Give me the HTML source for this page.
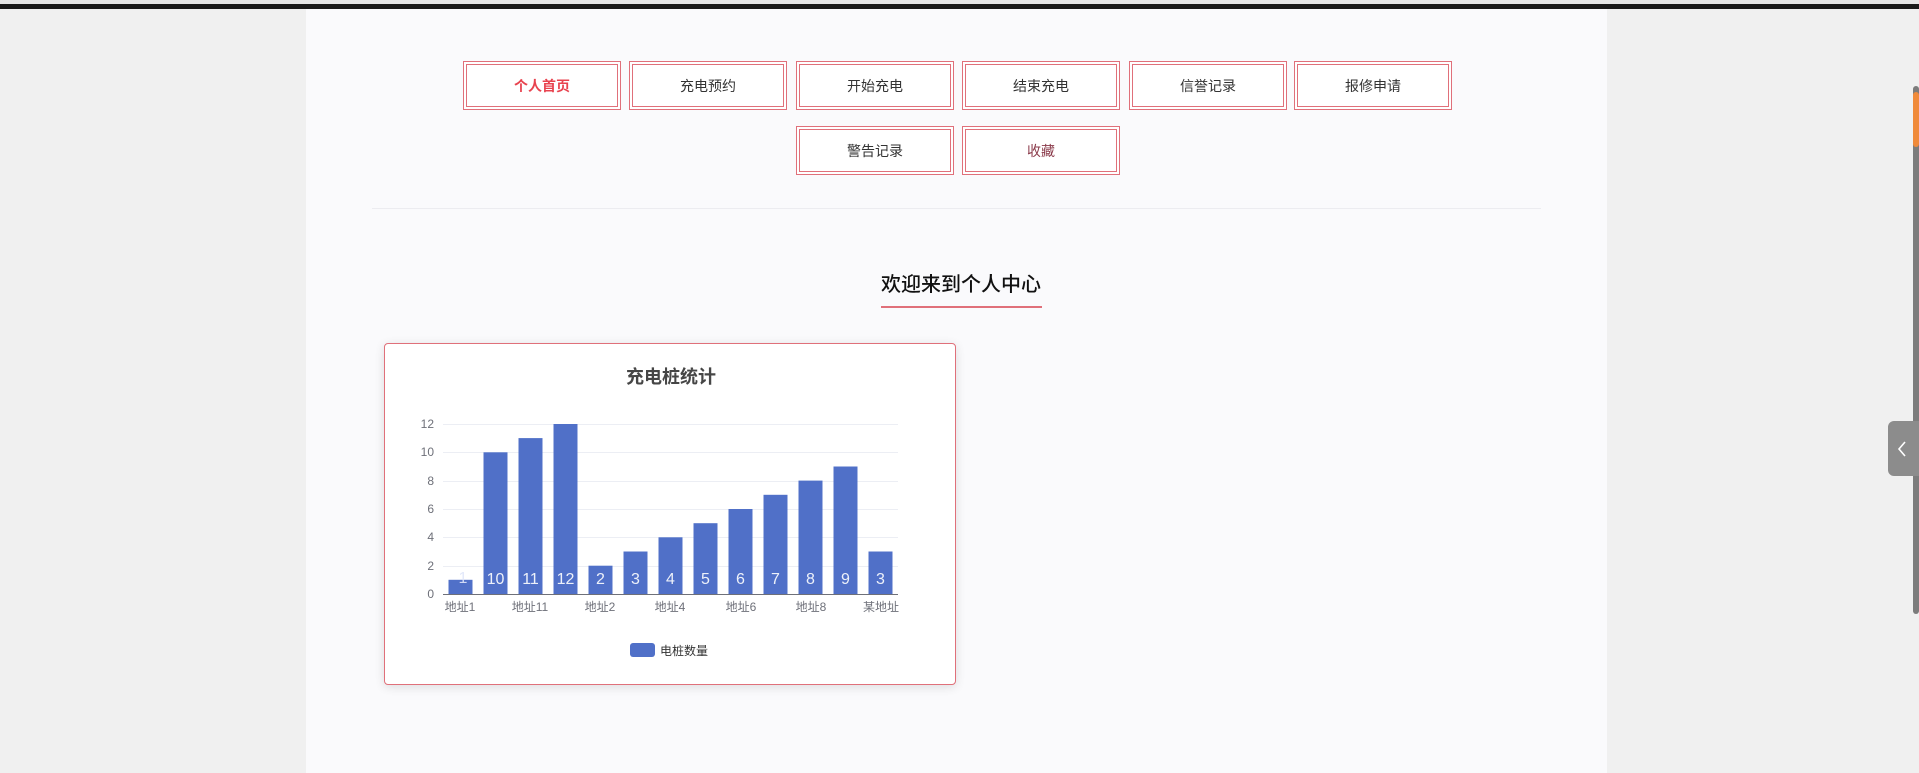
<!DOCTYPE html>
<html><head><meta charset="utf-8"><style>
*{margin:0;padding:0;box-sizing:border-box}
body{width:1919px;height:773px;background:#f0f0f0;position:relative;overflow:hidden;font-family:"Liberation Sans","Noto Sans CJK SC",sans-serif}
.top{position:absolute;left:0;top:0;width:1919px;height:4px;background:#e6e6e6}
.bar{position:absolute;left:0;top:4px;width:1919px;height:5px;background:#1a1a1a}
.main{position:absolute;left:306px;top:9px;width:1301px;height:764px;background:#fafafc}
.btn{position:absolute;width:158px;height:49px;border:1px solid #e0707a;background:#fff;font-size:14px;color:#333;display:flex;align-items:center;justify-content:center}
.btn::before{content:"";position:absolute;left:2px;top:2px;right:2px;bottom:2px;border:1px solid #e0707a}
.div{position:absolute;left:372px;top:208px;width:1169px;height:1px;background:#ececf0}
.h{position:absolute;left:860px;top:268px;width:202px;text-align:center;font-size:20px;color:#111;font-weight:500}
.ul{position:absolute;left:881px;top:306px;width:161px;height:2px;background:#e0707a}
.card{position:absolute;left:384px;top:343px;width:572px;height:342px;border:1px solid #e0707a;border-radius:4px;background:#fff;box-shadow:0 2px 10px rgba(0,0,0,.12)}
.track{position:absolute;left:1913px;top:86px;width:6px;height:528px;background:#7c7c7c;border-radius:3px}
.thumb{position:absolute;left:1913px;top:92px;width:6px;height:55px;background:#f08a3a;border-radius:3px}
.tab{position:absolute;left:1888px;top:421px;width:31px;height:55px;background:#8c8c8c;border-radius:6px 0 0 6px}
</style></head><body>
<div class="top"></div><div class="bar"></div>
<div class="main"></div>
<div class="btn" style="left:463px;top:61px;color:#e8434f;font-weight:bold">个人首页</div>
<div class="btn" style="left:629px;top:61px">充电预约</div>
<div class="btn" style="left:796px;top:61px">开始充电</div>
<div class="btn" style="left:962px;top:61px">结束充电</div>
<div class="btn" style="left:1129px;top:61px">信誉记录</div>
<div class="btn" style="left:1294px;top:61px">报修申请</div>
<div class="btn" style="left:796px;top:126px">警告记录</div>
<div class="btn" style="left:962px;top:126px;color:#8a3a4a">收藏</div>
<div class="div"></div>
<div class="h">欢迎来到个人中心</div>
<div class="ul"></div>
<div class="card"></div>
<svg style="position:absolute;left:0;top:0" width="1919" height="773" font-family="Liberation Sans, Noto Sans CJK SC, sans-serif">
<text x="671" y="383" text-anchor="middle" font-size="18" font-weight="bold" fill="#464646">充电桩统计</text>
<g stroke="#eceef4" stroke-width="1">
<line x1="443" y1="424.5" x2="898" y2="424.5"/><line x1="443" y1="452.5" x2="898" y2="452.5"/><line x1="443" y1="481.5" x2="898" y2="481.5"/><line x1="443" y1="509.5" x2="898" y2="509.5"/><line x1="443" y1="537.5" x2="898" y2="537.5"/><line x1="443" y1="566.5" x2="898" y2="566.5"/>
</g>
<g font-size="12" fill="#6e7079" text-anchor="end">
<text x="434" y="428">12</text><text x="434" y="456">10</text><text x="434" y="485">8</text><text x="434" y="513">6</text><text x="434" y="541">4</text><text x="434" y="570">2</text><text x="434" y="598">0</text>
</g>
<g fill="#5070c8">
<rect x="448.5" y="579.8" width="24" height="14.2"/>
<rect x="483.5" y="452.3" width="24" height="141.7"/>
<rect x="518.5" y="438.1" width="24" height="155.9"/>
<rect x="553.5" y="424" width="24" height="170"/>
<rect x="588.5" y="565.7" width="24" height="28.3"/>
<rect x="623.5" y="551.5" width="24" height="42.5"/>
<rect x="658.5" y="537.3" width="24" height="56.7"/>
<rect x="693.5" y="523.2" width="24" height="70.8"/>
<rect x="728.5" y="509" width="24" height="85"/>
<rect x="763.5" y="494.8" width="24" height="99.2"/>
<rect x="798.5" y="480.6" width="24" height="113.4"/>
<rect x="833.5" y="466.5" width="24" height="127.5"/>
<rect x="868.5" y="551.5" width="24" height="42.5"/>
</g>
<g font-size="16" fill="#fff" text-anchor="middle" opacity="0.9">
<text x="463" y="583" fill="#dfe6fa">1</text><text x="495.5" y="584">10</text><text x="530.5" y="584">11</text><text x="565.5" y="584">12</text><text x="600.5" y="584">2</text><text x="635.5" y="584">3</text><text x="670.5" y="584">4</text><text x="705.5" y="584">5</text><text x="740.5" y="584">6</text><text x="775.5" y="584">7</text><text x="810.5" y="584">8</text><text x="845.5" y="584">9</text><text x="880.5" y="584">3</text>
</g>
<line x1="443" y1="594.5" x2="898" y2="594.5" stroke="#6e7079"/>
<g font-size="12" fill="#6e7079" text-anchor="middle">
<text x="460" y="611">地址1</text><text x="530" y="611">地址11</text><text x="600" y="611">地址2</text><text x="670" y="611">地址4</text><text x="741" y="611">地址6</text><text x="811" y="611">地址8</text><text x="881" y="611">某地址</text>
</g>
<rect x="630" y="643" width="25" height="14" rx="3" fill="#5070c8"/>
<text x="660" y="655" font-size="12" fill="#333">电桩数量</text>
</svg>
<div class="track"></div><div class="thumb"></div>
<div class="tab"><svg width="31" height="55"><path d="M17 21 L11 28 L17 35" stroke="#fff" stroke-width="1.6" fill="none"/></svg></div>
</body></html>
